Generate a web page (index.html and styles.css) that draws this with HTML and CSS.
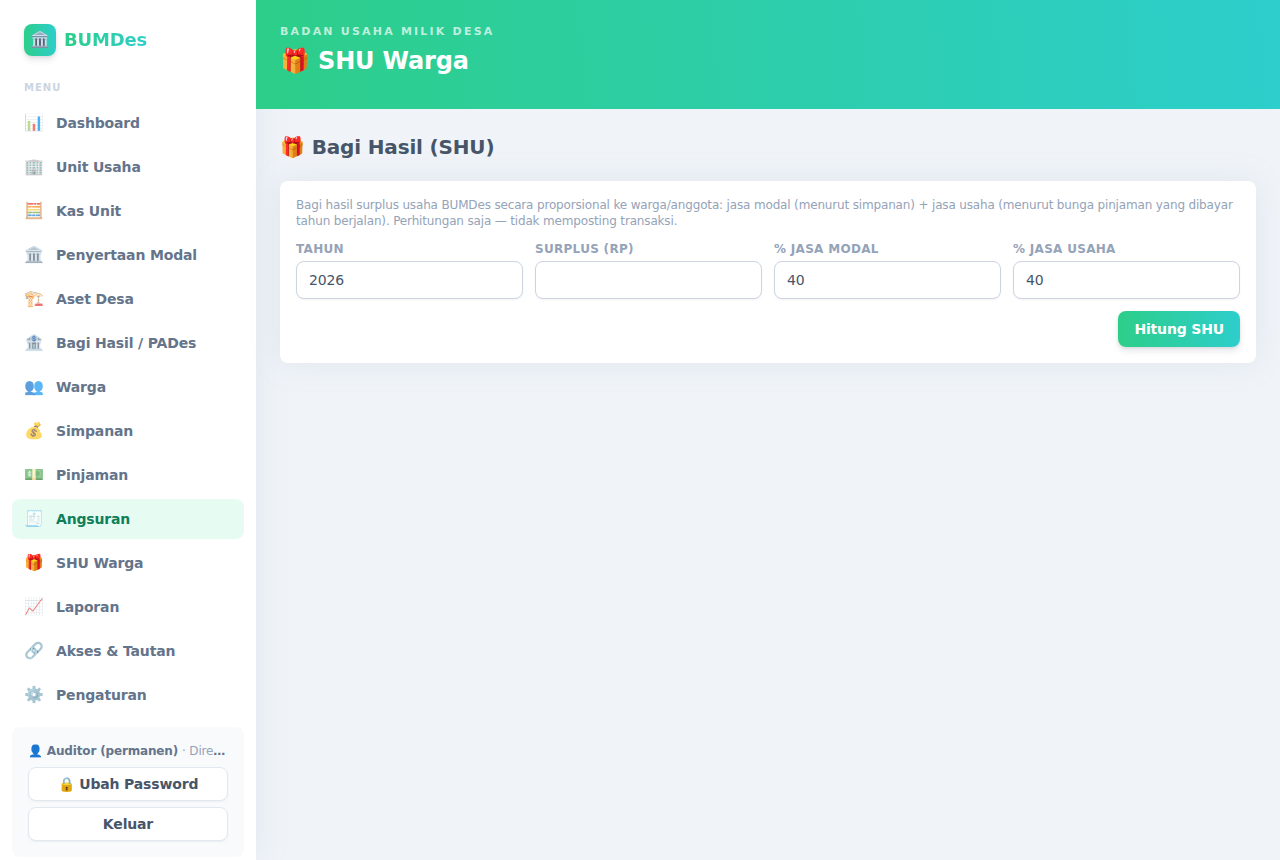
FILE: index.html
```html
<!DOCTYPE html>
<html lang="id">
<head>
<meta charset="utf-8">
<meta name="viewport" content="width=device-width, initial-scale=1">
<title>SHU Warga</title>
<link rel="stylesheet" href="styles.css">
</head>
<body>
<div class="layout">
  <aside class="sidebar">
    <div class="brand">
      <span class="brand-logo">🏛️</span>
      <span class="brand-name">BUMDes</span>
    </div>
    <div class="menu-title">Menu</div>
    <nav class="menu">
      <a class="menu-item" href="#"><span class="menu-icon">📊</span>Dashboard</a>
      <a class="menu-item" href="#"><span class="menu-icon">🏢</span>Unit Usaha</a>
      <a class="menu-item" href="#"><span class="menu-icon">🧮</span>Kas Unit</a>
      <a class="menu-item" href="#"><span class="menu-icon">🏛️</span>Penyertaan Modal</a>
      <a class="menu-item" href="#"><span class="menu-icon">🏗️</span>Aset Desa</a>
      <a class="menu-item" href="#"><span class="menu-icon">🏦</span>Bagi Hasil / PADes</a>
      <a class="menu-item" href="#"><span class="menu-icon">👥</span>Warga</a>
      <a class="menu-item" href="#"><span class="menu-icon">💰</span>Simpanan</a>
      <a class="menu-item" href="#"><span class="menu-icon">💵</span>Pinjaman</a>
      <a class="menu-item active" href="#"><span class="menu-icon">🧾</span>Angsuran</a>
      <a class="menu-item current" href="#"><span class="menu-icon">🎁</span>SHU Warga</a>
      <a class="menu-item" href="#"><span class="menu-icon">📈</span>Laporan</a>
      <a class="menu-item" href="#"><span class="menu-icon">🔗</span>Akses &amp; Tautan</a>
      <a class="menu-item" href="#"><span class="menu-icon">⚙️</span>Pengaturan</a>
    </nav>
    <div class="account">
      <div class="account-name">👤 Auditor (permanen) <span class="account-role">· Direktur</span></div>
      <button class="btn-outline" type="button">🔒 Ubah Password</button>
      <button class="btn-outline" type="button">Keluar</button>
    </div>
  </aside>
  <div class="page">
    <header class="page-header">
      <div class="eyebrow">Badan Usaha Milik Desa</div>
      <h1 class="page-title">🎁 SHU Warga</h1>
    </header>
    <main class="content">
      <h2 class="section-title">🎁 Bagi Hasil (SHU)</h2>
      <form class="card">
        <p class="hint">Bagi hasil surplus usaha BUMDes secara proporsional ke warga/anggota: jasa modal (menurut simpanan) + jasa usaha (menurut bunga pinjaman yang dibayar tahun berjalan). Perhitungan saja — tidak memposting transaksi.</p>
        <div class="fields">
          <div class="field"><label class="label" for="tahun">Tahun</label><input class="input" id="tahun" type="text" value="2026"></div>
          <div class="field"><label class="label" for="surplus">Surplus (Rp)</label><input class="input" id="surplus" type="text"></div>
          <div class="field"><label class="label" for="modal">% Jasa Modal</label><input class="input" id="modal" type="text" value="40"></div>
          <div class="field"><label class="label" for="usaha">% Jasa Usaha</label><input class="input" id="usaha" type="text" value="40"></div>
        </div>
        <div class="actions"><button class="btn-primary" type="button">Hitung SHU</button></div>
      </form>
    </main>
  </div>
</div>
</body>
</html>
```
FILE: styles.css
```css
* { box-sizing: border-box; }
body {
  margin: 0;
  background: #f0f4f9;
  color: #475569;
  font-family: "DejaVu Sans", sans-serif;
  font-size: 16px;
  letter-spacing: -0.01em;
}
button, input { font: inherit; letter-spacing: inherit; }
.layout { display: flex; min-height: 100vh; font-size: 14px; line-height: 20px; }
.sidebar {
  flex: 0 0 256px;
  min-width: 0;
  background: #fff;
  box-shadow: 0 0 32px rgba(136, 152, 170, .15);
}
.brand { display: flex; align-items: center; gap: 8px; padding: 24px 24px 0; }
.brand-logo {
  display: flex;
  align-items: center;
  justify-content: center;
  width: 32px;
  height: 32px;
  border-radius: 8px;
  background: linear-gradient(87deg, #2dce89, #2dcecc);
  box-shadow: 0 4px 6px rgba(50, 50, 93, .11), 0 1px 3px rgba(0, 0, 0, .08);
  font-size: 16px;
}
.brand-name {
  background: linear-gradient(87deg, #2dce89, #2dcecc);
  background-clip: text;
  color: transparent;
  font-size: 18px;
  line-height: 28px;
  font-weight: 700;
}
.menu-title {
  padding: 24px 24px 8px;
  color: #cbd5e1;
  font-size: 10px;
  line-height: 15px;
  font-weight: 700;
  letter-spacing: 0.1em;
  text-transform: uppercase;
}
.menu { display: flex; flex-direction: column; gap: 4px; padding: 0 12px; }
.menu-item {
  display: flex;
  align-items: center;
  gap: 12px;
  height: 40px;
  padding: 0 12px;
  border-radius: 8px;
  color: #64748b;
  font-weight: 600;
  text-decoration: none;
}
.menu-item.active { background: #e6fcf3; color: #0f7f59; }
.menu-icon { width: 20px; font-size: 16px; line-height: 24px; text-align: center; opacity: .7; }
.menu-item.current .menu-icon { opacity: 1; }
.account {
  display: flex;
  flex-direction: column;
  margin: 12px 12px 0;
  padding: 16px;
  border-radius: 8px;
  background: #f8fafc;
}
.account-name {
  margin-bottom: 8px;
  overflow: hidden;
  color: #64748b;
  font-size: 12px;
  line-height: 16px;
  font-weight: 600;
  text-overflow: ellipsis;
  white-space: nowrap;
}
.account-role { color: #94a3b8; font-weight: 400; }
.btn-outline {
  height: 34px;
  border: 1px solid #e2e8f0;
  border-radius: 8px;
  background: #fff;
  box-shadow: 0 1px 2px rgba(0, 0, 0, .05);
  color: #475569;
  font-weight: 600;
}
.btn-outline + .btn-outline { margin-top: 6px; }
.page { flex: 1; min-width: 0; }
.page-header {
  padding: 23px 24px 32px;
  background: linear-gradient(87deg, #2dce89, #2dcecc);
  color: #fff;
}
.eyebrow {
  margin-bottom: 5px;
  color: rgba(255, 255, 255, .7);
  font-size: 11px;
  line-height: 17px;
  font-weight: 600;
  letter-spacing: 0.2em;
  text-transform: uppercase;
}
.page-title { margin: 0; font-size: 24px; line-height: 32px; font-weight: 700; }
.content { padding: 24px; }
.section-title { margin: 0 0 20px; font-size: 20px; line-height: 28px; font-weight: 700; }
.card {
  padding: 16px;
  border-radius: 8px;
  background: #fff;
  box-shadow: 0 0 32px rgba(136, 152, 170, .15);
}
.hint { margin: 0 0 12px; color: #94a3b8; font-size: 12px; line-height: 16px; }
.fields { display: grid; grid-template-columns: repeat(4, minmax(0, 1fr)); gap: 12px; }
.field { display: flex; flex-direction: column; gap: 4px; }
.label {
  color: #94a3b8;
  font-size: 12px;
  line-height: 16px;
  font-weight: 600;
  letter-spacing: 0.025em;
  text-transform: uppercase;
}
.input {
  width: 100%;
  height: 38px;
  padding: 0 12px;
  border: 1px solid #cbd5e1;
  border-radius: 8px;
  background: #fff;
  box-shadow: 0 1px 2px rgba(0, 0, 0, .05);
  color: #475569;
}
.actions { display: flex; justify-content: flex-end; margin-top: 12px; }
.btn-primary {
  height: 36px;
  padding: 0 16px;
  border: 0;
  border-radius: 8px;
  background: linear-gradient(87deg, #2dce89, #2dcecc);
  box-shadow: 0 4px 6px rgba(50, 50, 93, .11), 0 1px 3px rgba(0, 0, 0, .08);
  color: #fff;
  font-weight: 600;
}
```
